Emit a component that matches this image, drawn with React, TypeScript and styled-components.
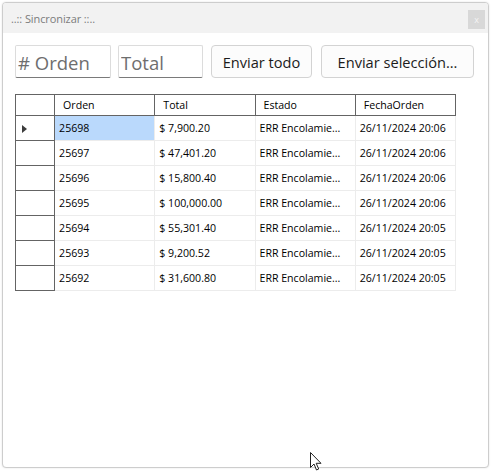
import React from "react";
import styled, { createGlobalStyle } from "styled-components";

const Global = createGlobalStyle`
  html, body { margin: 0; padding: 0; background: #ffffff; }
  body { font-family: "Open Sans", "Noto Sans", sans-serif; }
`;

const Page = styled.div`
  position: relative;
  width: 491px;
  height: 471px;
  padding: 2px;
  box-sizing: border-box;
`;

const Window = styled.div`
  width: 487px;
  height: 466px;
  box-sizing: border-box;
  border: 1px solid #cdcdcd;
  border-radius: 4px;
  box-shadow: 0 0 2px rgba(0, 0, 0, 0.12);
  background: #ffffff;
  display: flex;
  flex-direction: column;
  overflow: hidden;
`;

const TitleBar = styled.div`
  height: 30px;
  flex: none;
  background: #f2f2f2;
  display: flex;
  align-items: center;
  justify-content: space-between;
  padding: 0 3px 0 8px;
`;

const Title = styled.span`
  font-size: 11px;
  color: #7c7c7c;
  letter-spacing: -0.1px;
`;

const CloseBtn = styled.div`
  width: 17px;
  height: 19px;
  background: #d8d8d8;
  color: #f4f4f4;
  font-size: 9px;
  display: flex;
  align-items: center;
  justify-content: center;
  margin-top: 2px;
`;

const Body = styled.div`
  padding: 12px 12px 0 12px;
  display: flex;
  flex-direction: column;
`;

const Toolbar = styled.div`
  display: flex;
  align-items: center;
  height: 33px;
`;

const Input = styled.input<{ $w: number; $mr: number }>`
  width: ${(p) => p.$w}px;
  height: 33px;
  box-sizing: border-box;
  margin: 0 ${(p) => p.$mr}px 0 0;
  border: 1px solid #dcdcdc;
  border-bottom: 1px solid #7a7a7a;
  border-radius: 2px;
  padding: 2px 0 0 2px;
  font-family: "Open Sans", "Noto Sans", sans-serif;
  font-size: 18.5px;
  color: #333;
  background: #fff;
  outline: none;
  &::placeholder { color: #6e6e6e; }
`;

const Button = styled.button<{ $w: number; $mr: number }>`
  width: ${(p) => p.$w}px;
  height: 33px;
  margin: 0 ${(p) => p.$mr}px 0 0;
  box-sizing: border-box;
  border: 1px solid #d3d3d3;
  border-radius: 4px;
  background: #fcfcfc;
  font-family: "Open Sans", "Noto Sans", sans-serif;
  font-size: 14.6px;
  color: #1b1b1b;
  padding: 0;
`;

const Grid = styled.table`
  margin-top: 16px;
  border-collapse: separate;
  border-spacing: 0;
  table-layout: fixed;
  width: 441px;
  font-family: "Open Sans", "Noto Sans", sans-serif;
  font-size: 10.6px;
  color: #000;
`;

const HeadCell = styled.th<{ $w: number; $first?: boolean }>`
  width: ${(p) => p.$w}px;
  height: 22px;
  padding: 0 0 0 8px;
  text-align: left;
  font-weight: normal;
  box-sizing: border-box;
  border-top: 1px solid #646464;
  border-bottom: 1px solid #646464;
  border-right: 1px solid #646464;
  border-left: ${(p) => (p.$first ? "1px solid #646464" : "none")};
  white-space: nowrap;
  overflow: hidden;
`;

const RowHead = styled.td`
  height: 25px;
  box-sizing: border-box;
  border-left: 1px solid #646464;
  border-right: 1px solid #646464;
  border-bottom: 1px solid #646464;
  padding: 0 0 0 6px;
`;

const Cell = styled.td<{ $sel?: boolean }>`
  height: 25px;
  box-sizing: border-box;
  padding: 0 0 0 4px;
  border-right: 1px solid #ececec;
  border-bottom: 1px solid #ececec;
  background: ${(p) => (p.$sel ? "#bad9fc" : "#fff")};
  white-space: nowrap;
  overflow: hidden;
`;

const Indicator = styled.span`
  display: block;
  width: 0;
  height: 0;
  margin-top: 2px;
  border-top: 4px solid transparent;
  border-bottom: 4px solid transparent;
  border-left: 5px solid #3c3c3c;
`;

const Cursor = styled.svg`
  position: absolute;
  left: 310px;
  top: 452px;
`;

const rows = [
  ["25698", "$ 7,900.20", "ERR Encolamie...", "26/11/2024 20:06"],
  ["25697", "$ 47,401.20", "ERR Encolamie...", "26/11/2024 20:06"],
  ["25696", "$ 15,800.40", "ERR Encolamie...", "26/11/2024 20:06"],
  ["25695", "$ 100,000.00", "ERR Encolamie...", "26/11/2024 20:06"],
  ["25694", "$ 55,301.40", "ERR Encolamie...", "26/11/2024 20:05"],
  ["25693", "$ 9,200.52", "ERR Encolamie...", "26/11/2024 20:05"],
  ["25692", "$ 31,600.80", "ERR Encolamie...", "26/11/2024 20:05"],
];

export default function App() {
  return (
    <Page>
      <Global />
      <Window>
        <TitleBar>
          <Title>..:: Sincronizar ::..</Title>
          <CloseBtn>x</CloseBtn>
        </TitleBar>
        <Body>
          <Toolbar>
            <Input $w={96} $mr={7} placeholder="# Orden" />
            <Input $w={85} $mr={8} placeholder="Total" />
            <Button $w={101} $mr={9}>Enviar todo</Button>
            <Button $w={153} $mr={0}>Enviar selección...</Button>
          </Toolbar>
          <Grid>
            <thead>
              <tr>
                <HeadCell $w={40} $first />
                <HeadCell $w={100}>Orden</HeadCell>
                <HeadCell $w={100}>Total</HeadCell>
                <HeadCell $w={100}>Estado</HeadCell>
                <HeadCell $w={100}>FechaOrden</HeadCell>
              </tr>
            </thead>
            <tbody>
              {rows.map((r, i) => (
                <tr key={r[0]}>
                  <RowHead>{i === 0 && <Indicator />}</RowHead>
                  <Cell $sel={i === 0}>{r[0]}</Cell>
                  <Cell>{r[1]}</Cell>
                  <Cell>{r[2]}</Cell>
                  <Cell>{r[3]}</Cell>
                </tr>
              ))}
            </tbody>
          </Grid>
        </Body>
      </Window>
      <Cursor width="13" height="19" viewBox="0 0 13 19">
        <path
          d="M0.5 0.5 L0.5 15.5 L4 12 L6.5 18 L8.7 17 L6.2 11.3 L11 11.3 Z"
          fill="#fff"
          stroke="#222"
          strokeWidth="1"
          strokeLinejoin="round"
        />
      </Cursor>
    </Page>
  );
}
